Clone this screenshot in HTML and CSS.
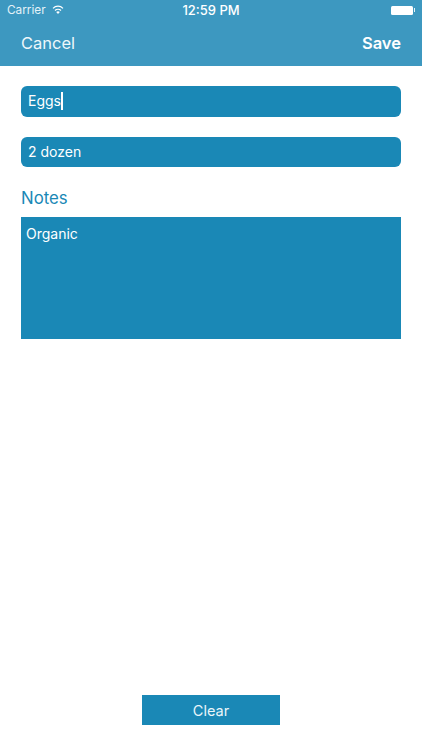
FILE: index.html
```html
<!DOCTYPE html>
<html lang="en">
<head>
<meta charset="utf-8">
<title>Edit item</title>
<link rel="stylesheet" href="styles.css">
</head>
<body>
<div class="screen">
  <header class="header">
    <div class="status">
      <div class="status-left">
        <span class="carrier">Carrier</span>
        <svg class="wifi" viewBox="0 0 12 9" width="12" height="9">
          <path d="M6 8.9 4.2 7a2.6 2.6 0 0 1 3.6 0Z" fill="#fff"/>
          <path d="M3 5.5a4.3 4.3 0 0 1 6 0" fill="none" stroke="#fff" stroke-width="1.2"/>
          <path d="M1 3.3a7 7 0 0 1 10 0" fill="none" stroke="#fff" stroke-width="1.2"/>
        </svg>
      </div>
      <span class="time">12:59 PM</span>
      <div class="battery"><span class="battery-body"></span><span class="battery-tip"></span></div>
    </div>
    <nav class="nav">
      <span class="cancel">Cancel</span>
      <span class="save">Save</span>
    </nav>
  </header>
  <main class="form">
    <div class="field first"><span>Eggs</span><span class="caret"></span></div>
    <div class="field second"><span>2 dozen</span></div>
    <div class="label">Notes</div>
    <div class="notes">Organic</div>
  </main>
  <div class="footer"><div class="clear">Clear</div></div>
</div>
</body>
</html>
```
FILE: styles.css
```css
* { box-sizing: border-box; }
html, body { margin: 0; padding: 0; background: #fff; }
body { font-family: Inter, "Liberation Sans", sans-serif; color: #fff; }
.screen { width: 422px; height: 750px; display: flex; flex-direction: column; overflow: hidden; }
.header { height: 66px; background: #3d98c0; flex: none; }
.status { height: 20px; padding: 0 7px; display: grid; grid-template-columns: 1fr auto 1fr; align-items: center; font-size: 11.8px; }
.status-left { display: flex; align-items: center; gap: 6px; }
.carrier { color: #e4f2f8; }
.wifi { display: block; margin-top: -1px; }
.time { font-weight: 500; font-size: 13px; }
.battery { justify-self: end; display: flex; align-items: center; }
.battery-body { width: 22px; height: 9px; background: #fff; border-radius: 1.5px; }
.battery-tip { width: 1.5px; height: 4px; background: #e4f2f8; margin-left: 0.5px; }
.nav { height: 46px; padding: 0 21px; display: flex; justify-content: space-between; align-items: center; font-size: 16.5px; }
.cancel { color: #eef7fb; }
.save { font-weight: 600; }
.form { flex: 1; padding: 20px 21px 0; display: flex; flex-direction: column; }
.field { height: 31px; background: #1a88b6; border-radius: 6px; padding: 0 0 2px 7px; display: flex; align-items: center; font-size: 14px; }
.first { margin-bottom: 20px; }
.second { height: 30px; }
.caret { width: 2px; height: 18px; background: #fff; }
.label { margin-top: 21px; height: 21px; line-height: 21px; color: #1a88b6; font-size: 16.8px; }
.notes { margin-top: 8px; height: 122px; background: #1a88b6; padding: 8px 5px; font-size: 14px; line-height: 18px; }
.footer { flex: none; height: 55px; display: flex; justify-content: center; }
.clear { width: 138px; height: 30px; background: #1a88b6; display: flex; align-items: center; justify-content: center; font-size: 14.5px; color: #e9f5fa; }
```
